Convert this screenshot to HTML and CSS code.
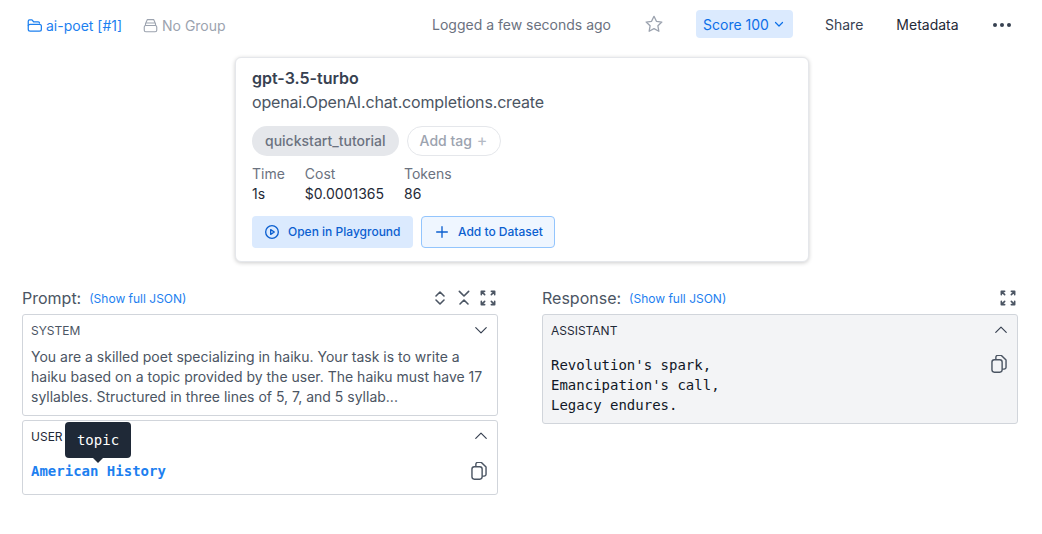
FILE: index.html
```html
<!DOCTYPE html>
<html>
  <head>
    <meta charset="utf-8">
    <title>gpt-3.5-turbo</title>
    <link rel="stylesheet" href="styles.css">
  </head>
  <body>
    <header class="topbar">
      <a class="project">
        <svg class="icon-15" viewBox="0 0 24 24" fill="none" stroke="currentColor" stroke-width="2" stroke-linecap="round" stroke-linejoin="round"><path d="M2 12V5a2 2 0 0 1 2-2h4l2.5 3H18a2 2 0 0 1 2 2"/><rect x="2" y="10" width="21" height="11" rx="3"/></svg>
        ai-poet [#1]
      </a>
      <span class="group">
        <svg class="icon-15" viewBox="0 0 24 24" fill="none" stroke="currentColor" stroke-width="1.8" stroke-linecap="round" stroke-linejoin="round"><rect x="2" y="12" width="20" height="10" rx="2.5"/><path d="M4 12V9l3-6.5h10L20 9v3M5 8h14"/></svg>
        No Group
      </span>
      <span class="logged">Logged a few seconds ago</span>
      <svg class="star" viewBox="0 0 24 24" fill="none" stroke="currentColor" stroke-width="1.6" stroke-linejoin="round"><path d="M12 2.8l2.9 6 6.5.9-4.7 4.5 1.1 6.5-5.8-3.1-5.8 3.1 1.1-6.5-4.7-4.5 6.5-.9z"/></svg>
      <button class="score">Score 100
        <svg class="icon-12" viewBox="0 0 24 24" fill="none" stroke="currentColor" stroke-width="2.4" stroke-linecap="round" stroke-linejoin="round"><path d="M5 9l7 7 7-7"/></svg>
      </button>
      <span class="share">Share</span>
      <span class="metadata">Metadata</span>
      <span class="dots"><i></i><i></i><i></i></span>
    </header>

    <section class="card">
      <div class="model">gpt-3.5-turbo</div>
      <div class="func">openai.OpenAI.chat.completions.create</div>
      <div class="tags">
        <span class="tag">quickstart_tutorial</span>
        <span class="tag-add">Add tag <b>+</b></span>
      </div>
      <div class="stats">
        <div><div class="stat-label">Time</div><div class="stat-value">1s</div></div>
        <div><div class="stat-label">Cost</div><div class="stat-value">$0.0001365</div></div>
        <div><div class="stat-label">Tokens</div><div class="stat-value">86</div></div>
      </div>
      <div class="actions">
        <button class="btn-play">
          <svg class="icon-16" viewBox="0 0 24 24" fill="none" stroke="currentColor" stroke-width="2" stroke-linejoin="round"><circle cx="12" cy="12" r="9.5"/><path d="M10 8.5l5.5 3.5-5.5 3.5z"/></svg>
          Open in Playground
        </button>
        <button class="btn-add">
          <svg class="icon-16" viewBox="0 0 24 24" fill="none" stroke="currentColor" stroke-width="2" stroke-linecap="round"><path d="M12 4v16M4 12h16"/></svg>
          Add to Dataset
        </button>
      </div>
    </section>

    <main class="panes">
      <section>
        <div class="pane-head">
          <span class="pane-title">Prompt:</span>
          <a class="json-link">(Show full JSON)</a>
          <span class="pane-tools">
            <svg class="icon-16" viewBox="0 0 24 24" fill="none" stroke="currentColor" stroke-width="2.4" stroke-linecap="round" stroke-linejoin="round"><path d="M6 9l6-6 6 6M6 15l6 6 6-6"/></svg>
            <svg class="icon-16" viewBox="0 0 24 24" fill="none" stroke="currentColor" stroke-width="2.4" stroke-linecap="round" stroke-linejoin="round"><path d="M5 2l7 7 7-7M6 21l6-6 6 6"/></svg>
            <svg class="icon-16" viewBox="0 0 24 24" fill="none" stroke="currentColor" stroke-width="2.4" stroke-linecap="round" stroke-linejoin="round"><path d="M2 7V2h5M22 7V2h-5M2 17v5h5M22 17v5h-5M2 2l5 5M22 2l-5 5M2 22l5-5M22 22l-5-5"/></svg>
          </span>
        </div>
        <div class="msg">
          <div class="msg-head">
            <span class="role">SYSTEM</span>
            <svg class="chev" viewBox="0 0 24 24" fill="none" stroke="currentColor" stroke-width="2" stroke-linecap="round" stroke-linejoin="round"><path d="M3 8l9 9 9-9"/></svg>
          </div>
          <p class="msg-text">You are a skilled poet specializing in haiku. Your task is to write a haiku based on a topic provided by the user. The haiku must have 17 syllables. Structured in three lines of 5, 7, and 5 syllab...</p>
        </div>
        <div class="msg msg-user">
          <div class="msg-head">
            <span class="role role-dark">USER</span>
            <svg class="chev" viewBox="0 0 24 24" fill="none" stroke="currentColor" stroke-width="2" stroke-linecap="round" stroke-linejoin="round"><path d="M3 16l9-9 9 9"/></svg>
          </div>
          <div class="code-row">
            <span class="var">American History</span>
            <svg class="copy" viewBox="2 1 20 23" fill="none" stroke="currentColor" stroke-width="1.8" stroke-linejoin="round"><rect x="3" y="7" width="13" height="16" rx="3"/><path d="M8 7V4a2.5 2.5 0 0 1 2.5-2.5H15l6 6v9a2.5 2.5 0 0 1-2.5 2.5H16"/></svg>
          </div>
          <div class="tooltip">topic</div>
        </div>
      </section>

      <section>
        <div class="pane-head">
          <span class="pane-title">Response:</span>
          <a class="json-link">(Show full JSON)</a>
          <span class="pane-tools">
            <svg class="icon-16" viewBox="0 0 24 24" fill="none" stroke="currentColor" stroke-width="2.4" stroke-linecap="round" stroke-linejoin="round"><path d="M2 7V2h5M22 7V2h-5M2 17v5h5M22 17v5h-5M2 2l5 5M22 2l-5 5M2 22l5-5M22 22l-5-5"/></svg>
          </span>
        </div>
        <div class="msg msg-grey">
          <div class="msg-head">
            <span class="role role-dark">ASSISTANT</span>
            <svg class="chev" viewBox="0 0 24 24" fill="none" stroke="currentColor" stroke-width="2" stroke-linecap="round" stroke-linejoin="round"><path d="M3 16l9-9 9 9"/></svg>
          </div>
          <div class="code-row code-row-top">
            <pre class="answer">Revolution's spark,
Emancipation's call,
Legacy endures.</pre>
            <svg class="copy" viewBox="2 1 20 23" fill="none" stroke="currentColor" stroke-width="1.8" stroke-linejoin="round"><rect x="3" y="7" width="13" height="16" rx="3"/><path d="M8 7V4a2.5 2.5 0 0 1 2.5-2.5H15l6 6v9a2.5 2.5 0 0 1-2.5 2.5H16"/></svg>
          </div>
        </div>
      </section>
    </main>
  </body>
</html>
```

FILE: styles.css
```css
* {
  box-sizing: border-box;
}

body {
  font-family: Inter, "Liberation Sans", sans-serif;
  background-color: #ffffff;
  color: #374151;
  margin: 0;
  font-size: 14px;
}

svg {
  display: block;
  flex: none;
}

.icon-16 {
  width: 16px;
  height: 16px;
}

.icon-15 {
  width: 15px;
  height: 15px;
}

.icon-12 {
  width: 12px;
  height: 12px;
}

.topbar {
  display: flex;
  align-items: center;
  height: 48px;
  padding-left: 27px;
}

.project {
  display: flex;
  align-items: center;
  gap: 4px;
  color: #1d80f0;
  width: 116px;
  padding-top: 3px;
}

.group {
  display: flex;
  align-items: center;
  gap: 4px;
  color: #9ca3af;
  width: 289px;
  padding-top: 2px;
}

.logged {
  color: #6b7280;
  width: 212px;
}

.star {
  width: 20px;
  height: 20px;
  color: #9ca3af;
  margin-right: 32px;
}

.score {
  display: flex;
  align-items: center;
  gap: 4px;
  height: 28px;
  width: 97px;
  padding: 0 0 0 7px;
  border: none;
  border-radius: 4px;
  background-color: #dbeafe;
  color: #0b6fe8;
  font: inherit;
}

.share {
  margin-left: 32px;
  color: #374151;
}

.metadata {
  margin-left: 33px;
  color: #1f2937;
  padding-top: 1px;
}

.dots {
  display: flex;
  gap: 3px;
  margin-left: 34px;
  padding-top: 1px;
}

.dots i {
  width: 4px;
  height: 4px;
  border-radius: 50%;
  background-color: #374151;
}

.card {
  width: 574px;
  height: 205px;
  margin: 9px 0 0 235px;
  padding: 10px 16px;
  background-color: #ffffff;
  border: 1px solid #e5e7eb;
  border-radius: 6px;
  box-shadow: 0 1px 4px rgba(0, 0, 0, 0.2);
}

.model {
  font-size: 16px;
  font-weight: 600;
  line-height: 20px;
  color: #374151;
}

.func {
  font-size: 16px;
  line-height: 24px;
  letter-spacing: -0.16px;
  margin-top: 2px;
  color: #4b5563;
}

.tags {
  display: flex;
  gap: 8px;
  margin-top: 12px;
}

.tag {
  height: 30px;
  line-height: 30px;
  padding: 0 13px;
  border-radius: 15px;
  background-color: #e5e7eb;
  color: #6b7280;
  font-weight: 500;
}

.tag-add {
  height: 30px;
  line-height: 28px;
  padding: 0 13px 0 12px;
  border: 1px solid #e5e7eb;
  border-radius: 15px;
  color: #9ca3af;
  font-weight: 500;
}

.tag-add b {
  font-weight: 400;
  font-size: 16px;
  line-height: 0;
  color: #b4bac4;
  margin-left: 1px;
}

.stats {
  display: flex;
  gap: 20px;
  margin-top: 8px;
  line-height: 20px;
}

.stat-label {
  color: #6b7280;
}

.stat-value {
  color: #1f2937;
}

.actions {
  display: flex;
  gap: 8px;
  margin-top: 12px;
}

.actions button {
  display: flex;
  align-items: center;
  gap: 8px;
  height: 32px;
  border-radius: 4px;
  font: inherit;
  font-size: 12px;
  font-weight: 500;
  line-height: 14px;
  color: #0b5fd0;
  padding: 0 12px 1px;
  white-space: nowrap;
}

.btn-play {
  border: none;
  background-color: #dbeafe;
  width: 161px;
}

.btn-add {
  border: 1px solid #93c5fd;
  background-color: #eff6ff;
  width: 134px;
}

.panes {
  display: grid;
  grid-template-columns: 476px 476px;
  gap: 44px;
  margin: 24px 0 0 22px;
}

.pane-head {
  display: flex;
  align-items: center;
  height: 24px;
  margin-bottom: 4px;
}

.pane-title {
  font-size: 16px;
  color: #4b5563;
}

.json-link {
  font-size: 12px;
  color: #1d80f0;
  margin-left: 8px;
}

.pane-tools {
  display: flex;
  gap: 8px;
  margin-left: auto;
  color: #4b5563;
  margin-right: 2px;
}

.msg {
  position: relative;
  border: 1px solid #d1d5db;
  border-radius: 3px;
  background-color: #ffffff;
}

.msg-user {
  height: 75px;
  margin-top: 4px;
}

.msg-grey {
  background-color: #f3f4f6;
  height: 110px;
}

.msg-head {
  display: flex;
  align-items: center;
  justify-content: space-between;
  height: 30px;
  padding: 0 9px 0 8px;
}

.role {
  font-size: 12px;
  color: #4b5563;
}

.role-dark {
  color: #1f2937;
}

.chev {
  width: 14px;
  height: 14px;
  color: #374151;
}

.msg-text {
  margin: 0;
  padding: 2px 8px 0;
  height: 70px;
  line-height: 20px;
  color: #4b5563;
}

.code-row {
  display: flex;
  align-items: center;
  justify-content: space-between;
  padding: 10px 10px 0 8px;
}

.code-row-top {
  align-items: flex-start;
  padding-top: 10px;
}

.var {
  font-family: "DejaVu Sans Mono", monospace;
  font-size: 14px;
  font-weight: 700;
  color: #1d80f0;
  line-height: 20px;
}

.copy {
  width: 16px;
  height: 18px;
  color: #4b5563;
}

.answer {
  margin: 0;
  font-family: "DejaVu Sans Mono", monospace;
  font-size: 14px;
  line-height: 20px;
  color: #111827;
}

.tooltip {
  position: absolute;
  left: 42px;
  top: 1px;
  width: 66px;
  height: 36px;
  line-height: 36px;
  text-align: center;
  border-radius: 4px;
  background-color: #1f2937;
  color: #ffffff;
  font-family: "DejaVu Sans Mono", monospace;
  font-size: 14px;
}

.tooltip::after {
  content: "";
  position: absolute;
  left: 28px;
  top: 36px;
  border: 5px solid transparent;
  border-top-color: #1f2937;
  border-bottom: none;
}
```
